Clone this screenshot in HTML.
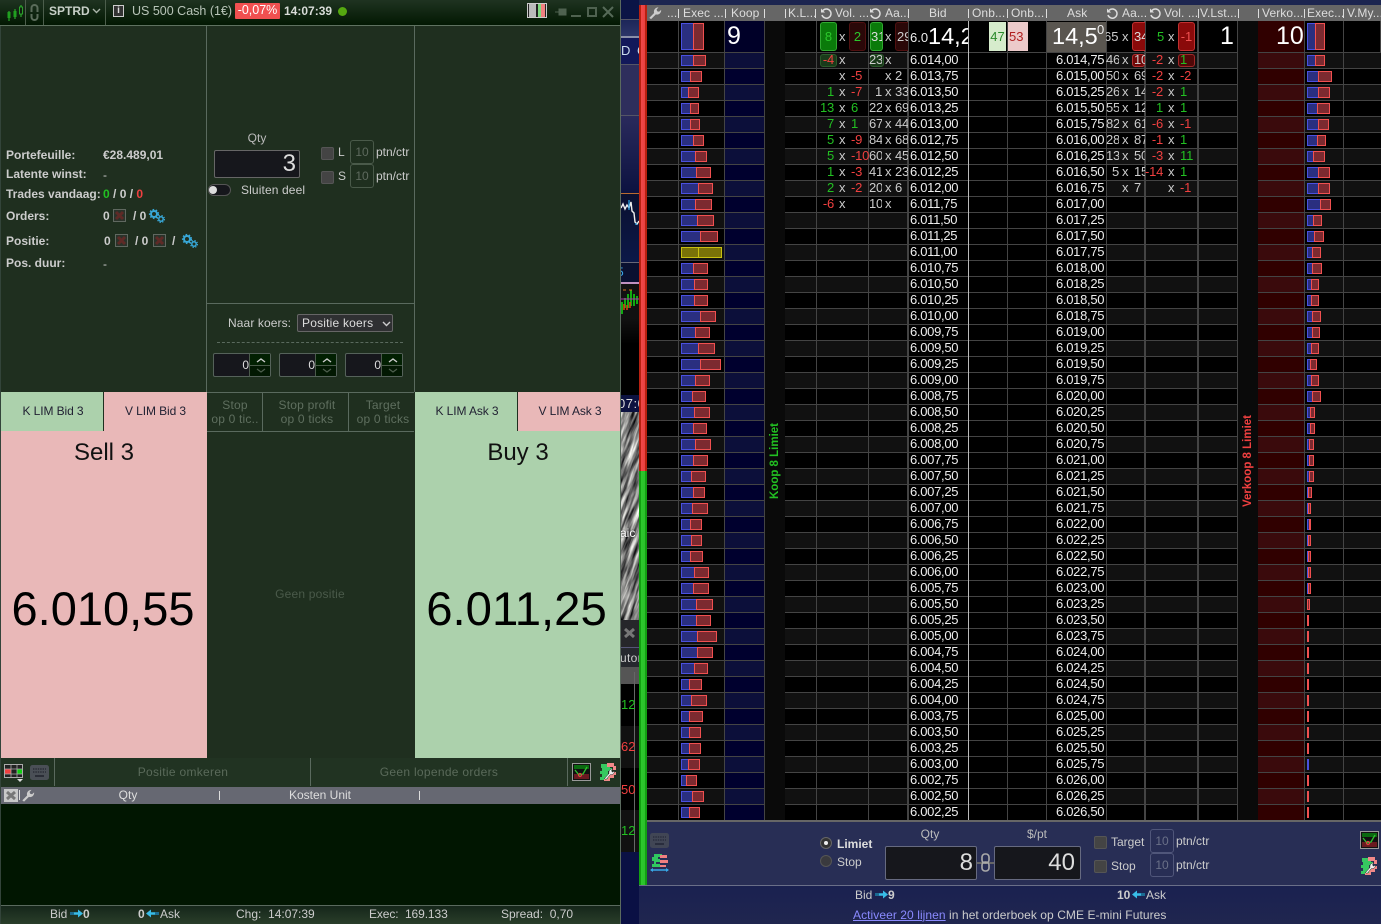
<!DOCTYPE html>
<html><head><meta charset="utf-8"><title>Trading</title>
<style>
html,body{margin:0;padding:0;background:#0c1240}
body{width:1381px;height:924px;position:relative;overflow:hidden;font:12px/14px "Liberation Sans",sans-serif;color:#ccc}
.a,.t,.st{position:absolute}
.t{white-space:nowrap}
.c{transform:translateX(-50%)}
.bd{font-weight:bold}
.g{color:#22c022}.r{color:#f04040}
.box{box-sizing:border-box;position:absolute}
svg{position:absolute;overflow:visible}
/* ladder */
.col{position:absolute;top:52px;height:769px;box-sizing:border-box;border-right:1px solid #444;background:linear-gradient(#444 1px,transparent 1px) 0 0/100% 16px,linear-gradient(#111 16px,#000 16px) 0 0/100% 32px}
.hc{position:absolute;top:21px;height:31px;box-sizing:border-box;border-right:1px solid #444;background:#000}
.st{top:52px;font-size:13px;line-height:16px;white-space:pre;overflow:hidden;letter-spacing:-.2px}
.p{color:#eee;letter-spacing:-.3px;font-size:13px}
.hd{position:absolute;top:6px;font-size:12px;line-height:14px;color:#ddd;white-space:nowrap;letter-spacing:.1px}
.tk{position:absolute;top:9px;width:1px;height:9px;background:#ddd}
.bars{position:absolute;top:52px}
.bars p{margin:0;height:16px;padding-top:3px;box-sizing:border-box;display:flex}
.bars i{display:block;height:11px;box-sizing:border-box;background:#2a2f80;border:1px solid #4a50e0}
.bars b{display:block;height:11px;box-sizing:border-box;background:#7c2a30;border:1px solid #f05050;margin-left:-1px}
.big{position:absolute;font-size:25px;line-height:28px;color:#fff;white-space:nowrap}
.inp{position:absolute;box-sizing:border-box;background:#16171c;border:1px solid #666;border-radius:2px;color:#ddd;text-align:right;font-size:24px}
.cb{position:absolute;box-sizing:border-box;width:13px;height:13px;background:#444;border:1px solid #555;border-radius:2px}
.n10{position:absolute;box-sizing:border-box;width:24px;height:24px;border:1px solid #4a5a4a;border-radius:3px;color:#5e6a5e;text-align:center;line-height:22px;font-size:12px}
.spin{position:absolute;box-sizing:border-box;width:58px;height:24px;top:353px;background:#16171c;border:1px solid #55625a;border-radius:2px;color:#ddd;text-align:right;padding-right:21px;font-size:12px;line-height:22px}
.spin u{position:absolute;right:0;top:0;width:20px;height:22px;background:linear-gradient(#022002 11px,#4a5a4a 11px,#4a5a4a 12px,#021802 12px);border-left:1px solid #4a5a4a}
.spin svg{left:0;top:0}
</style></head>
<body>
<svg width="0" height="0" style="position:absolute">
<defs>
<g id="gear"><circle cx="5" cy="5" r="3" fill="none" stroke="#38a8d8" stroke-width="2"/><circle cx="5" cy="5" r="4.4" fill="none" stroke="#38a8d8" stroke-width="1.4" stroke-dasharray="1.6 1.6"/><circle cx="12" cy="10" r="2.2" fill="none" stroke="#38a8d8" stroke-width="1.5"/><circle cx="12" cy="10" r="3.5" fill="none" stroke="#38a8d8" stroke-width="1.1" stroke-dasharray="1.4 1.4"/></g>
<g id="xb"><rect x=".5" y=".5" width="12" height="12" fill="#2a332a" stroke="#606860"/><path d="M3 3l7 7M10 3l-7 7" stroke="#5e2a26" stroke-width="3"/></g>
<path id="wr" d="M1.5 13.5 L7 8 C6 5 8 1.5 12 1.5 L9.8 4 L10.5 6 L12.6 6.6 L15 4.4 C15.4 8 12 10.6 9 9.6 L3.5 15 Z" fill="#ccc"/>
<g id="tick"><rect x=".5" y=".5" width="18" height="17" fill="#111" stroke="#999"/><rect x="2" y="2" width="15" height="4" fill="#0a6a10"/><rect x="2" y="11" width="15" height="5" fill="#6a1a20"/><path d="M3 7l4 5 4-1 4-7" fill="none" stroke="#30c030" stroke-width="1.3"/><circle cx="8" cy="12" r="1.6" fill="none" stroke="#e04040"/></g>
<g id="wtree"><path d="M2 1h9v4h2v3H9v3h2v3H9v3H1v-3h2v-3H1V8h2V5H2z" fill="#36c860"/><path d="M8 0h7v3h2v4h-3V4H8zM11 9h6v3h-2v3h-4v3H5v-2h4v-3h2z" fill="#f08888"/><path d="M5.5 15.5 L10 10.5 C9.4 8 11.2 5.6 14 6 L12.4 7.8 L13.6 9.2 L15.4 7.8 C15.6 10.4 13.6 12 11.4 11.6 L7 16.5 Z" fill="#eee" stroke="#222" stroke-width=".5"/></g>
<g id="kb"><rect x="0" y="0" width="19" height="15" rx="2.5" fill="#4a4f56"/><path d="M3 4h13M3 7h13" stroke="#2a2d36" stroke-width="1.6" stroke-dasharray="1.4 1"/><rect x="5" y="10" width="9" height="2" fill="#2a2d36"/></g>
<g id="arr"><path d="M0 3.2h8v-2.7l5 4-5 4v-2.7H0z" fill="#38bce8"/><path d="M0 3.2h4v2.6H0z" fill="#1a6a90"/></g>
<g id="arl"><path d="M13 3.2H5v-2.7l-5 4 5 4v-2.7h8z" fill="#38bce8"/><path d="M13 3.2H9v2.6h4z" fill="#1a6a90"/></g>
<filter id="rk" x="0" y="0" width="100%" height="100%" color-interpolation-filters="sRGB"><feTurbulence type="fractalNoise" baseFrequency=".28 .035" numOctaves="3" seed="4"/><feColorMatrix type="matrix" values="1.5 0 0 0 -.25 1.5 0 0 0 -.25 1.45 0 0 0 -.23 0 0 0 0 1"/></filter>
</defs>
</svg>

<!-- LEFT WINDOW -->
<div class="a" style="left:0;top:0;width:621px;height:924px;background:#1f2f1f;border-left:1px solid #33443a;border-right:1px solid #5a6a5e;box-sizing:border-box"></div>
<div class="a" style="left:0;top:0;width:620px;height:25px;background:linear-gradient(#1f3321,#021802);border-bottom:1px solid #5f7260"></div>
<div class="a" style="left:25px;top:0;width:1px;height:25px;background:#4c5e4c"></div>
<div class="a" style="left:43px;top:0;width:1px;height:25px;background:#4c5e4c"></div>
<div class="a" style="left:105px;top:0;width:1px;height:25px;background:#4c5e4c"></div>
<svg style="left:6px;top:3px" width="16" height="18"><path d="M3 8v10M9 6v10M15 2v12" stroke="#30c030"/><rect x="1.5" y="9" width="3" height="6" fill="#20a020"/><rect x="7.5" y="8" width="3" height="6" fill="#20a020"/><rect x="13.5" y="4" width="3" height="7" fill="#102010" stroke="#30c030" stroke-width=".8"/></svg>
<svg style="left:29px;top:3px" width="11" height="19"><path d="M1.5 9V5a4 4 0 0 1 8 0v4H7.5V5a2 2 0 0 0-4 0v4zM1.5 11v3a4 4 0 0 0 8 0v-3H7.5v3a2 2 0 0 1-4 0v-3z" fill="#5b6c5b"/></svg>
<div class="t bd" style="left:49px;top:4px;font-size:12px;color:#c8d0c8">SPTRD</div>
<svg style="left:92px;top:8px" width="9" height="6"><path d="M1 1l3.5 3.5L8 1" fill="none" stroke="#aab4aa" stroke-width="1.4"/></svg>
<div class="a" style="left:113px;top:5px;width:11px;height:12px;background:#ccc"></div>
<div class="a" style="left:114px;top:6px;width:9px;height:10px;background:#333;color:#ddd;font:bold 10px/10px 'Liberation Sans';text-align:center">i</div>
<div class="t" style="left:132px;top:4px;font-size:12.5px;color:#b8c4b8">US 500 Cash (1€)</div>
<div class="t" style="left:235px;top:3px;width:45px;height:16px;background:#f05050;color:#fff;text-align:center;line-height:15px;font-size:12.5px;border-radius:1px">-0,07%</div>
<div class="t bd" style="left:284px;top:4px;font-size:12px;color:#d8dcd8">14:07:39</div>
<div class="a" style="left:338px;top:7px;width:9px;height:9px;border-radius:50%;background:#55a810"></div>
<div class="a" style="left:527px;top:3px;width:20px;height:15px;box-sizing:border-box;border:1px solid #ccc;background:linear-gradient(90deg,#222 0,#222 1px,#bbb 1px,#bbb 8px,#222 8px,#222 10px,#80d880 10px,#80d880 13px,#f08080 13px,#f08080 17px,#222 17px)"></div>
<svg style="left:555px;top:7px" width="11" height="10"><path d="M0 5h4M4 2h7v6H4z" fill="#4f6250" stroke="#4f6250"/></svg>
<div class="a" style="left:571px;top:15px;width:10px;height:2px;background:#4f6250"></div>
<div class="a" style="left:587px;top:7px;width:10px;height:10px;box-sizing:border-box;border:2px solid #4f6250;border-top-width:2px"></div>
<svg style="left:603px;top:7px" width="10" height="10"><path d="M0 0l10 10M10 0L0 10" stroke="#566a58" stroke-width="2"/></svg>

<div class="a" style="left:206px;top:26px;width:1px;height:366px;background:#5a6a5e"></div>
<div class="a" style="left:414px;top:26px;width:1px;height:366px;background:#5a6a5e"></div>

<div class="t bd" style="left:6px;top:148px">Portefeuille:</div><div class="t bd" style="left:103px;top:148px">€28.489,01</div>
<div class="t bd" style="left:6px;top:167px">Latente winst:</div><div class="t" style="left:103px;top:168px">-</div>
<div class="t bd" style="left:6px;top:187px">Trades vandaag:</div><div class="t bd" style="left:103px;top:187px"><span class="g">0</span> / 0 / <span class="r">0</span></div>
<div class="t bd" style="left:6px;top:209px">Orders:</div><div class="t bd" style="left:103px;top:209px">0</div>
<svg style="left:113px;top:209px" width="13" height="13"><use href="#xb"/></svg><div class="t bd" style="left:133px;top:209px">/ 0</div>
<svg style="left:149px;top:209px" width="16" height="14"><use href="#gear"/></svg>
<div class="t bd" style="left:6px;top:234px">Positie:</div><div class="t bd" style="left:104px;top:234px">0</div>
<svg style="left:115px;top:234px" width="13" height="13"><use href="#xb"/></svg><div class="t bd" style="left:135px;top:234px">/ 0</div>
<svg style="left:153px;top:234px" width="13" height="13"><use href="#xb"/></svg><div class="t bd" style="left:172px;top:234px">/</div>
<svg style="left:182px;top:234px" width="16" height="14"><use href="#gear"/></svg>
<div class="t bd" style="left:6px;top:256px">Pos. duur:</div><div class="t" style="left:103px;top:257px">-</div>

<div class="t c" style="left:257px;top:131px;color:#bbb">Qty</div>
<div class="inp" style="left:214px;top:150px;width:86px;height:28px;line-height:26px;padding-right:3px">3</div>
<div class="a" style="left:208px;top:184px;width:23px;height:12px;box-sizing:border-box;background:#16171c;border:1px solid #555;border-radius:6px"></div>
<div class="a" style="left:209px;top:186px;width:8px;height:8px;border-radius:50%;background:#ddd"></div>
<div class="t" style="left:241px;top:183px;letter-spacing:.12px">Sluiten deel</div>
<div class="cb" style="left:321px;top:147px"></div><div class="t" style="left:338px;top:145px">L</div><div class="n10" style="left:350px;top:140px">10</div><div class="t" style="left:376px;top:145px">ptn/ctr</div>
<div class="cb" style="left:321px;top:171px"></div><div class="t" style="left:338px;top:169px">S</div><div class="n10" style="left:350px;top:164px">10</div><div class="t" style="left:376px;top:169px">ptn/ctr</div>

<div class="a" style="left:207px;top:303px;width:207px;height:1px;background:#5a6a5e"></div>
<div class="t" style="left:228px;top:316px;letter-spacing:.1px">Naar koers:</div>
<div class="a" style="left:297px;top:314px;width:96px;height:18px;box-sizing:border-box;background:#2f3032;border:1px solid #666;border-radius:2px;padding-left:4px;line-height:16px;color:#ddd;letter-spacing:.2px">Positie koers</div>
<svg style="left:382px;top:321px" width="9" height="6"><path d="M1 1l3.5 3.5L8 1" fill="none" stroke="#ccc" stroke-width="1.4"/></svg>
<div class="a" style="left:217px;top:342px;width:186px;border-top:1px dashed #5a6a5e"></div>
<div class="spin" style="left:213px">0<u></u><svg width="58" height="24"><path d="M43 12l4-3 4 3" transform="translate(0 -4)" fill="none" stroke="#ccc" stroke-width="1.4"/><path d="M43 15l4 3 4-3" fill="none" stroke="#4e5e4e" stroke-width="1.2"/></svg></div>
<div class="spin" style="left:279px">0<u></u><svg width="58" height="24"><path d="M43 12l4-3 4 3" transform="translate(0 -4)" fill="none" stroke="#ccc" stroke-width="1.4"/><path d="M43 15l4 3 4-3" fill="none" stroke="#4e5e4e" stroke-width="1.2"/></svg></div>
<div class="spin" style="left:345px">0<u></u><svg width="58" height="24"><path d="M43 12l4-3 4 3" transform="translate(0 -4)" fill="none" stroke="#ccc" stroke-width="1.4"/><path d="M43 15l4 3 4-3" fill="none" stroke="#4e5e4e" stroke-width="1.2"/></svg></div>

<!-- buttons -->
<div class="a" style="left:1px;top:392px;width:102px;height:39px;background:#acd1ac;color:#223;text-align:center;line-height:38px;padding-left:2px;box-sizing:border-box;letter-spacing:-.1px">K LIM Bid 3</div>
<div class="a" style="left:104px;top:392px;width:103px;height:39px;background:#e9b8b8;color:#223;text-align:center;line-height:38px;letter-spacing:-.1px">V LIM Bid 3</div>
<div class="a" style="left:207px;top:392px;width:207px;height:1px;background:#5a6a5e"></div>
<div class="a" style="left:207px;top:431px;width:207px;height:1px;background:#5a6a5e"></div>
<div class="a" style="left:262px;top:392px;width:1px;height:39px;background:#5a6a5e"></div>
<div class="a" style="left:348px;top:392px;width:1px;height:39px;background:#5a6a5e"></div>
<div class="t c" style="left:235px;top:398px;color:#5f6f5f;text-align:center;letter-spacing:.2px">Stop<br>op 0 tic..</div>
<div class="t c" style="left:307px;top:398px;color:#5f6f5f;text-align:center;letter-spacing:.2px">Stop profit<br>op 0 ticks</div>
<div class="t c" style="left:383px;top:398px;color:#5f6f5f;text-align:center;letter-spacing:.2px">Target<br>op 0 ticks</div>
<div class="a" style="left:415px;top:392px;width:102px;height:39px;background:#acd1ac;color:#223;text-align:center;line-height:38px;padding-left:2px;box-sizing:border-box;letter-spacing:-.1px">K LIM Ask 3</div>
<div class="a" style="left:518px;top:392px;width:102px;height:39px;background:#e9b8b8;color:#223;text-align:center;line-height:38px;padding-left:2px;box-sizing:border-box;letter-spacing:-.1px">V LIM Ask 3</div>
<div class="a" style="left:1px;top:431px;width:206px;height:327px;background:#e9b8b8"></div>
<div class="a" style="left:415px;top:431px;width:205px;height:327px;background:#acd1ac"></div>
<div class="t c" style="left:104px;top:439px;font-size:24px;line-height:28px;color:#111">Sell 3</div>
<div class="t c" style="left:518px;top:439px;font-size:24px;line-height:28px;color:#111">Buy 3</div>
<div class="t c" style="left:103px;top:580px;font-size:47px;line-height:58px;color:#000">6.010,55</div>
<div class="t c" style="left:516.5px;top:581px;font-size:47.3px;line-height:58px;color:#000">6.011,25</div>
<div class="t c" style="left:310px;top:587px;color:#4a5a4a;letter-spacing:.2px">Geen positie</div>

<!-- toolbar -->
<div class="a" style="left:1px;top:758px;width:619px;height:29px;background:#213322;border-bottom:1px solid #0a120a"></div>
<div class="a" style="left:54px;top:758px;width:1px;height:28px;background:#5a6a5e"></div>
<div class="a" style="left:310px;top:758px;width:1px;height:28px;background:#5a6a5e"></div>
<div class="a" style="left:567px;top:758px;width:1px;height:28px;background:#5a6a5e"></div>
<svg style="left:4px;top:764px" width="20" height="20"><rect x=".5" y=".5" width="18" height="13" fill="#222" stroke="#aaa"/><rect x="1" y="5" width="6" height="5" fill="#f04040"/><rect x="13" y="5" width="5" height="5" fill="#10d010"/><path d="M7 1v13M13 1v13M1 5h18M1 10h18" stroke="#aaa" stroke-width=".8"/><path d="M13 15h6l-3 3z" fill="#ddd"/></svg>
<svg style="left:30px;top:765px" width="19" height="15"><use href="#kb"/></svg>
<div class="t c" style="left:183px;top:765px;color:#5a6a5a;letter-spacing:.3px">Positie omkeren</div>
<div class="t c" style="left:439px;top:765px;color:#5a6a5a;letter-spacing:.3px">Geen lopende orders</div>
<svg style="left:572px;top:763px" width="19" height="18"><use href="#tick"/></svg>
<svg style="left:599px;top:763px" width="18" height="18"><use href="#wtree"/></svg>
<!-- table -->
<div class="a" style="left:1px;top:787px;width:619px;height:17px;background:#666872"></div>
<svg style="left:4px;top:789px" width="14" height="13"><rect width="14" height="13" fill="#c8c8c8"/><path d="M3 3l8 7M11 3l-8 7" stroke="#777" stroke-width="3"/></svg>
<div class="a" style="left:19px;top:790px;width:1px;height:10px;background:#ddd"></div>
<svg style="left:21px;top:788px" width="14" height="15" viewBox="0 0 16 16"><use href="#wr"/></svg>
<div class="t c" style="left:128px;top:788px;color:#ddd">Qty</div>
<div class="a" style="left:219px;top:791px;width:1px;height:9px;background:#ddd"></div>
<div class="t c" style="left:320px;top:788px;color:#ddd">Kosten Unit</div>
<div class="a" style="left:419px;top:791px;width:1px;height:9px;background:#ddd"></div>
<div class="a" style="left:1px;top:804px;width:619px;height:101px;background:#011601"></div>
<div class="a" style="left:1px;top:905px;width:619px;height:19px;background:linear-gradient(#15261a,#2a3e2a);border-top:1px solid #5a6a5e;box-sizing:border-box"></div>
<div class="t" style="left:50px;top:907px">Bid</div><svg style="left:70px;top:909px" width="13" height="9"><use href="#arr"/></svg><div class="t bd" style="left:83px;top:907px">0</div>
<div class="t bd" style="left:138px;top:907px">0</div><svg style="left:146px;top:909px" width="13" height="9"><use href="#arl"/></svg><div class="t" style="left:160px;top:907px">Ask</div>
<div class="t" style="left:236px;top:907px">Chg:&nbsp; 14:07:39</div>
<div class="t" style="left:369px;top:907px;letter-spacing:-.1px">Exec:&nbsp; 169.133</div>
<div class="t" style="left:501px;top:907px;letter-spacing:0">Spread:&nbsp; 0,70</div>

<!-- MIDDLE STRIP -->
<div class="a" style="left:621px;top:0;width:18px;height:924px;background:#0c1240;overflow:hidden" id="s">
  <div class="a" style="left:0;top:0;width:18px;height:19px;background:#0b1446;border-bottom:1px solid #556"></div>
  <div class="a" style="left:0;top:20px;width:18px;height:16px;background:linear-gradient(#1c2658,#2c3568);border-bottom:2px solid #8a8fa8"></div>
  <div class="a" style="left:0;top:38px;width:18px;height:26px;background:#12185a;border-bottom:1px solid #556"></div>
  <div class="t" style="left:0;top:44px;font-size:13px;color:#cde;letter-spacing:1.5px">D C</div>
  <div class="a" style="left:0;top:65px;width:18px;height:50px;background:#2e2e5c;border-bottom:1px solid #556"></div>
  <div class="a" style="left:0;top:116px;width:18px;height:77px;background:linear-gradient(#2a2a5c,#0c1240)"></div>
  <div class="a" style="left:0;top:193px;width:18px;height:1px;background:#b86a30"></div>
  <div class="a" style="left:0;top:194px;width:18px;height:68px;background:linear-gradient(#0a1030,#0c1848)"></div>
  <svg style="left:0;top:194px" width="18" height="40"><path d="M0 14l2-4 2 5 2-4 2 3 2-6 1 9 2 2 1 9 2 2 2-3" fill="none" stroke="#eee" stroke-width="1.4"/><path d="M8 6v10M15 29v2" stroke="#2aa0e0" stroke-width="1.3"/></svg>
  <div class="a" style="left:0;top:262px;width:18px;height:1px;background:#667"></div>
  <div class="a" style="left:0;top:263px;width:18px;height:19px;background:#0a1030"></div>
  <div class="t" style="left:-4px;top:265px;color:#38a8e8;font-size:12px">5</div>
  <div class="a" style="left:0;top:282px;width:18px;height:2px;background:#c090c0"></div>
  <div class="a" style="left:0;top:284px;width:18px;height:111px;background:linear-gradient(#111 0,#111 35px,#000 60px)"></div>
  <svg style="left:0;top:284px" width="18" height="36"><path d="M1 30V18M4 24V14M7 24V10M10 22V6M13 22V10M16 20V12" stroke="#10d010" stroke-width="1.6"/><path d="M3 26v-6M6 26v-5M9 24v-6" stroke="#d04010" stroke-width="1.6"/><path d="M0 15h18" stroke="#b030b0"/><path d="M2 6h3M8 6h3" stroke="#d87020"/></svg>
  <div class="t" style="left:-3px;top:397px;color:#ddd;font-size:13px;letter-spacing:.5px">07:0</div>
  <div class="a" style="left:0;top:412px;width:18px;height:208px;background:#808080;overflow:hidden"><svg style="left:0;top:0" width="18" height="208"><rect x="-60" y="-60" width="140" height="340" transform="rotate(20 9 104)" filter="url(#rk)"/></svg></div>
  <div class="t" style="left:-1px;top:526px;color:#fff;font-size:12px;text-shadow:0 0 2px #000">aic</div>
  <div class="a" style="left:0;top:620px;width:18px;height:27px;background:#26262a"></div>
  <svg style="left:3px;top:628px" width="11" height="10"><path d="M1 1l9 8M10 1L1 9" stroke="#777" stroke-width="3"/></svg>
  <div class="a" style="left:0;top:647px;width:18px;height:20px;background:#26282e;border-top:1px solid #557"></div>
  <div class="t" style="left:-1px;top:651px;color:#ccc;letter-spacing:.3px">utor</div>
  <div class="a" style="left:0;top:667px;width:18px;height:17px;background:#555"></div>
  <div class="a" style="left:0;top:684px;width:18px;height:42px;background:#000"></div>
  <div class="a" style="left:0;top:726px;width:18px;height:42px;background:#111"></div>
  <div class="a" style="left:0;top:768px;width:18px;height:42px;background:#000"></div>
  <div class="a" style="left:0;top:810px;width:18px;height:42px;background:#111"></div>
  <div class="a" style="left:13px;top:672px;width:1px;height:180px;background:#666"></div>
  <div class="t g" style="left:0;top:698px;font-size:13px">12</div>
  <div class="t r" style="left:0;top:740px;font-size:13px">62</div>
  <div class="t r" style="left:0;top:783px;font-size:13px">50</div>
  <div class="t g" style="left:0;top:824px;font-size:13px">12</div>
  <div class="a" style="left:0;top:852px;width:18px;height:72px;background:#0a1044"></div>
</div>

<!-- LADDER -->
<div class="a" style="left:639px;top:0;width:742px;height:5px;background:#1c2550"></div>
<div class="a" style="left:639px;top:5px;width:8px;height:466px;background:linear-gradient(90deg,#b82010 0,#b82010 2px,#f04848 2px,#e84040 6px,#b82010 6px)"></div>
<div class="a" style="left:639px;top:471px;width:8px;height:414px;background:linear-gradient(90deg,#12a012 0,#12a012 2px,#2cc82c 2px,#2cc02c 6px,#12a012 6px)"></div>

<div class="a" style="left:647px;top:21px;width:734px;height:31px;background:#000"></div>
<!-- header cells -->
<div class="hc" style="left:647px;width:32px"></div>
<div class="hc" style="left:679px;width:46px"></div>
<div class="hc" style="left:725px;width:40px;background:#000028"></div>
<div class="hc" style="left:785px;width:32px"></div>
<div class="hc" style="left:817px;width:52px"></div>
<div class="hc" style="left:869px;width:40px;border-right-width:2px"></div>
<div class="hc" style="left:909px;width:60px;border-right-color:#bbb"></div>
<div class="hc" style="left:969px;width:39px"></div>
<div class="hc" style="left:1008px;width:39px"></div>
<div class="hc" style="left:1047px;width:60px"></div>
<div class="hc" style="left:1107px;width:39px;border-right-width:2px"></div>
<div class="hc" style="left:1146px;width:53px;border-right-width:2px"></div>
<div class="hc" style="left:1199px;width:39px"></div>
<div class="hc" style="left:1258px;width:47px;background:#300000"></div>
<div class="hc" style="left:1305px;width:39px"></div>
<div class="hc" style="left:1344px;width:37px"></div>
<!-- dark cols -->
<div class="a" style="left:765px;top:21px;width:20px;height:800px;background:#0a0a0a"></div>
<div class="a" style="left:1238px;top:21px;width:20px;height:800px;background:#0a0a0a"></div>
<!-- body cols -->
<div class="col" style="left:647px;width:32px"></div>
<div class="col" style="left:679px;width:46px"></div>
<div class="col" style="left:725px;width:40px;background:linear-gradient(#444 1px,transparent 1px) 0 0/100% 16px,linear-gradient(#0c0f3a 16px,#00002e 16px) 0 0/100% 32px"></div>
<div class="col" style="left:785px;width:32px"></div>
<div class="col" style="left:817px;width:52px"></div>
<div class="col" style="left:869px;width:40px;border-right-width:2px"></div>
<div class="col" style="left:909px;width:60px;border-right-color:#bbb;background:linear-gradient(#444 1px,transparent 1px) 0 0/100% 16px,#000"></div>
<div class="col" style="left:969px;width:39px;background:linear-gradient(#444 1px,transparent 1px) 0 0/100% 16px,#000"></div>
<div class="col" style="left:1008px;width:39px;background:linear-gradient(#444 1px,transparent 1px) 0 0/100% 16px,#000"></div>
<div class="col" style="left:1047px;width:60px;background:linear-gradient(#444 1px,transparent 1px) 0 0/100% 16px,#000"></div>
<div class="col" style="left:1107px;width:39px;border-right-width:2px"></div>
<div class="col" style="left:1146px;width:53px;border-right-width:2px"></div>
<div class="col" style="left:1199px;width:39px"></div>
<div class="col" style="left:1258px;width:47px;background:linear-gradient(#444 1px,transparent 1px) 0 0/100% 16px,linear-gradient(#3a0a0c 16px,#300000 16px) 0 0/100% 32px"></div>
<div class="col" style="left:1305px;width:39px"></div>
<div class="col" style="left:1344px;width:37px;border-right:none"></div>

<!-- header bar -->
<div class="a" style="left:647px;top:5px;width:734px;height:16px;background:#666"></div>
<svg style="left:648px;top:6px" width="14" height="14" viewBox="0 0 16 16"><use href="#wr"/></svg>
<div class="hd" style="left:667px">...</div><div class="tk" style="left:678px"></div>
<div class="hd" style="left:683px">Exec ...</div><div class="tk" style="left:725px"></div>
<div class="hd" style="left:731px">Koop</div><div class="tk" style="left:764px"></div>
<div class="tk" style="left:785px"></div><div class="hd" style="left:788px">K.L...</div><div class="tk" style="left:815px"></div>
<svg style="left:820px;top:7px" width="12" height="12"><path d="M3 3.5A4.6 4.6 0 1 1 2 8" fill="none" stroke="#ddd" stroke-width="1.5"/><path d="M1 1.5v4h4z" fill="#ddd"/></svg>
<div class="hd" style="left:835px">Vol. ...</div>
<svg style="left:869px;top:7px" width="12" height="12"><path d="M3 3.5A4.6 4.6 0 1 1 2 8" fill="none" stroke="#ddd" stroke-width="1.5"/><path d="M1 1.5v4h4z" fill="#ddd"/></svg>
<div class="hd" style="left:885px">Aa...</div><div class="tk" style="left:908px"></div>
<div class="hd" style="left:929px">Bid</div><div class="tk" style="left:968px"></div>
<div class="hd" style="left:972px">Onb...</div><div class="tk" style="left:1007px"></div>
<div class="hd" style="left:1011px">Onb...</div><div class="tk" style="left:1046px"></div>
<div class="hd" style="left:1067px">Ask</div>
<svg style="left:1106px;top:7px" width="12" height="12"><path d="M3 3.5A4.6 4.6 0 1 1 2 8" fill="none" stroke="#ddd" stroke-width="1.5"/><path d="M1 1.5v4h4z" fill="#ddd"/></svg>
<div class="hd" style="left:1122px">Aa...</div>
<svg style="left:1149px;top:7px" width="12" height="12"><path d="M3 3.5A4.6 4.6 0 1 1 2 8" fill="none" stroke="#ddd" stroke-width="1.5"/><path d="M1 1.5v4h4z" fill="#ddd"/></svg>
<div class="hd" style="left:1164px">Vol. ...</div><div class="tk" style="left:1198px"></div>
<div class="hd" style="left:1200px">V.Lst...</div><div class="tk" style="left:1238px"></div>
<div class="tk" style="left:1258px"></div><div class="hd" style="left:1262px">Verko...</div><div class="tk" style="left:1304px"></div>
<div class="hd" style="left:1307px">Exec...</div><div class="tk" style="left:1343px"></div>
<div class="hd" style="left:1347px">V.My...</div>

<!-- header big cells -->
<div class="bars" style="left:681px;top:23px;display:flex"><i style="display:block;width:13px;height:27px;box-sizing:border-box;background:#2a2f80;border:1px solid #4a50e0"></i><b style="display:block;width:11px;height:27px;box-sizing:border-box;background:#7c2a30;border:1px solid #f05050;margin-left:-1px"></b></div>
<div class="bars" style="left:1307px;top:23px;display:flex"><i style="display:block;width:9px;height:27px;box-sizing:border-box;background:#2a2f80;border:1px solid #4a50e0"></i><b style="display:block;width:10px;height:27px;box-sizing:border-box;background:#7c2a30;border:1px solid #f05050;margin-left:-1px"></b></div>
<div class="big" style="left:727px;top:22px">9</div>
<div class="box" style="left:820px;top:22px;width:17px;height:29px;background:#0a7a0a;border:1px solid #30a830;border-radius:3px;color:#2cc82c;text-align:center;line-height:27px;font-size:13px">8</div>
<div class="t" style="left:839px;top:30px;font-size:13px;color:#ccc">x</div>
<div class="box" style="left:849px;top:22px;width:17px;height:29px;background:#2a0808;border:1px solid #501010;border-radius:3px;color:#2cc82c;text-align:center;line-height:27px;font-size:13px">2</div>
<div class="a" style="left:869px;top:22px;width:39px;height:30px;overflow:hidden;font-size:13px">
  <div class="box" style="left:1px;top:0;width:13px;height:29px;background:#0a7a0a;border:1px solid #30a830;border-radius:3px;color:#ddd;text-align:right;line-height:27px;overflow:hidden;white-space:nowrap">31</div>
  <div class="t" style="left:16px;top:8px;color:#ccc">x</div>
  <div class="box" style="left:26px;top:0;width:18px;height:29px;background:#2a0808;border:1px solid #501010;border-radius:3px;color:#ccc;line-height:27px;padding-left:1px">29</div>
</div>
<div class="t" style="left:910px;top:31px;font-size:13px;color:#eee">6.0</div>
<div class="a" style="left:928px;top:22px;width:40px;height:29px;overflow:hidden"><div class="big" style="left:0;top:0;font-size:23.5px">14,2</div></div>
<div class="box" style="left:989px;top:22px;width:17px;height:29px;background:#d6eccc;color:#2a8a2a;text-align:center;line-height:29px;font-size:13px">47</div>
<div class="box" style="left:1008px;top:22px;width:20px;height:29px;background:#eccaca;color:#b02020;text-align:left;padding-left:1px;line-height:29px;font-size:13px">53</div>
<div class="a" style="left:1047px;top:22px;width:59px;height:30px;background:#5a5650"></div>
<div class="big" style="left:1052px;top:22px;font-size:23.5px">14,5</div>
<div class="t" style="left:1097px;top:23px;font-size:13px;color:#eee">0</div>
<div class="a" style="left:1106px;top:22px;width:39px;height:30px;overflow:hidden;font-size:13px">
  <div class="t" style="left:-2px;top:8px;color:#ccc">65</div>
  <div class="t" style="left:16px;top:8px;color:#ccc">x</div>
  <div class="box" style="left:26px;top:0;width:18px;height:29px;background:#8a0a0a;border:1px solid #c03030;border-radius:3px;color:#ddd;line-height:27px;padding-left:1px">34</div>
</div>
<div class="t g" style="left:1157px;top:30px;font-size:13px">5</div>
<div class="t" style="left:1168px;top:30px;font-size:13px;color:#ccc">x</div>
<div class="box" style="left:1178px;top:22px;width:17px;height:29px;background:#8a0a0a;border:1px solid #c03030;border-radius:3px;color:#f05050;text-align:center;line-height:27px;font-size:13px">-1</div>
<div class="big" style="left:1220px;top:22px">1</div>
<div class="big" style="left:1276px;top:22px">10</div>

<!-- vertical labels -->
<div class="t bd g" style="left:775px;top:461px;transform:translate(-50%,-50%) rotate(-90deg);font-size:11.5px">Koop 8 Limiet</div>
<div class="t bd r" style="left:1248px;top:461px;transform:translate(-50%,-50%) rotate(-90deg);font-size:11.5px">Verkoop 8 Limiet</div>

<!-- row 0 boxes -->
<div class="box" style="left:820px;top:54px;width:17px;height:13px;background:#1a3a1a;border:1px solid #2a5a2a;border-radius:3px"></div>
<div class="box" style="left:870px;top:54px;width:14px;height:13px;background:#1a3a1a;border:1px solid #2a5a2a;border-radius:3px"></div>
<div class="box" style="left:1132px;top:54px;width:13px;height:13px;background:#700808;border:1px solid #b03030;border-radius:3px"></div>
<div class="box" style="left:1178px;top:54px;width:17px;height:13px;background:#500808;border:1px solid #a02828;border-radius:3px"></div>

<!-- Vol left -->
<div class="st" style="left:817px;width:17px;text-align:right"><span class="r">-4</span>

<span class="g">1</span>
<span class="g">13</span>
<span class="g">7</span>
<span class="g">5</span>
<span class="g">5</span>
<span class="g">1</span>
<span class="g">2</span>
<span class="r">-6</span></div>
<div class="st" style="left:839px;width:10px;color:#ccc">x
x
x
x
x
x
x
x
x
x</div>
<div class="st" style="left:851px;width:18px;"> 
<span class="r">-5</span>
<span class="r">-7</span>
<span class="g">6</span>
<span class="g">1</span>
<span class="r">-9</span>
<span class="r">-10</span>
<span class="r">-3</span>
<span class="r">-2</span></div>
<!-- Aa left -->
<div class="st" style="left:869px;width:13px;text-align:right;color:#ccc">23

1
22
67
84
60
41
20
10</div>
<div class="st" style="left:885px;width:10px;color:#ccc">x
x
x
x
x
x
x
x
x
x</div>
<div class="st" style="left:895px;width:13px;color:#ccc"> 
2
33
69
44
68
45
23
6</div>
<!-- Bid -->
<div class="st p" style="left:910px;width:57px">6.014,00
6.013,75
6.013,50
6.013,25
6.013,00
6.012,75
6.012,50
6.012,25
6.012,00
6.011,75
6.011,50
6.011,25
6.011,00
6.010,75
6.010,50
6.010,25
6.010,00
6.009,75
6.009,50
6.009,25
6.009,00
6.008,75
6.008,50
6.008,25
6.008,00
6.007,75
6.007,50
6.007,25
6.007,00
6.006,75
6.006,50
6.006,25
6.006,00
6.005,75
6.005,50
6.005,25
6.005,00
6.004,75
6.004,50
6.004,25
6.004,00
6.003,75
6.003,50
6.003,25
6.003,00
6.002,75
6.002,50
6.002,25</div>
<!-- Ask -->
<div class="st p" style="left:1056px;width:50px">6.014,75
6.015,00
6.015,25
6.015,50
6.015,75
6.016,00
6.016,25
6.016,50
6.016,75
6.017,00
6.017,25
6.017,50
6.017,75
6.018,00
6.018,25
6.018,50
6.018,75
6.019,00
6.019,25
6.019,50
6.019,75
6.020,00
6.020,25
6.020,50
6.020,75
6.021,00
6.021,25
6.021,50
6.021,75
6.022,00
6.022,25
6.022,50
6.022,75
6.023,00
6.023,25
6.023,50
6.023,75
6.024,00
6.024,25
6.024,50
6.024,75
6.025,00
6.025,25
6.025,50
6.025,75
6.026,00
6.026,25
6.026,50</div>
<!-- Aa right -->
<div class="st" style="left:1106px;width:13px;text-align:right;color:#ccc">46
50
26
55
82
28
13
5</div>
<div class="st" style="left:1122px;width:10px;color:#ccc">x
x
x
x
x
x
x
x
x</div>
<div class="st" style="left:1134px;width:11px;color:#ccc">10
69
14
12
61
87
50
15
7</div>
<!-- Vol right -->
<div class="st" style="left:1145px;width:18px;text-align:right"><span class="r">-2</span>
<span class="r">-2</span>
<span class="r">-2</span>
<span class="g">1</span>
<span class="r">-6</span>
<span class="r">-1</span>
<span class="r">-3</span>
<span class="r">-14</span></div>
<div class="st" style="left:1168px;width:10px;color:#ccc">x
x
x
x
x
x
x
x
x</div>
<div class="st" style="left:1180px;width:18px"><span class="g">1</span>
<span class="r">-2</span>
<span class="g">1</span>
<span class="g">1</span>
<span class="r">-1</span>
<span class="g">1</span>
<span class="g">11</span>
<span class="g">1</span>
<span class="r">-1</span></div>

<!-- exec bars left -->
<div class="bars" style="left:681px">
<p><i style="width:13px"></i><b style="width:13px"></b></p>
<p><i style="width:10px"></i><b style="width:12px"></b></p>
<p><i style="width:8px"></i><b style="width:11px"></b></p>
<p><i style="width:10px"></i><b style="width:9px"></b></p>
<p><i style="width:10px"></i><b style="width:10px"></b></p>
<p><i style="width:13px"></i><b style="width:11px"></b></p>
<p><i style="width:15px"></i><b style="width:12px"></b></p>
<p><i style="width:16px"></i><b style="width:15px"></b></p>
<p><i style="width:18px"></i><b style="width:15px"></b></p>
<p><i style="width:15px"></i><b style="width:17px"></b></p>
<p><i style="width:17px"></i><b style="width:17px"></b></p>
<p><i style="width:20px"></i><b style="width:18px"></b></p>
<p><i style="width:18px;background:#7a7208;border-color:#c8c010"></i><b style="width:24px;background:#7a7208;border-color:#c8c010"></b></p>
<p><i style="width:13px"></i><b style="width:15px"></b></p>
<p><i style="width:14px"></i><b style="width:14px"></b></p>
<p><i style="width:14px"></i><b style="width:14px"></b></p>
<p><i style="width:20px"></i><b style="width:16px"></b></p>
<p><i style="width:15px"></i><b style="width:15px"></b></p>
<p><i style="width:18px"></i><b style="width:17px"></b></p>
<p><i style="width:20px"></i><b style="width:21px"></b></p>
<p><i style="width:15px"></i><b style="width:15px"></b></p>
<p><i style="width:12px"></i><b style="width:14px"></b></p>
<p><i style="width:14px"></i><b style="width:16px"></b></p>
<p><i style="width:13px"></i><b style="width:14px"></b></p>
<p><i style="width:15px"></i><b style="width:16px"></b></p>
<p><i style="width:13px"></i><b style="width:15px"></b></p>
<p><i style="width:11px"></i><b style="width:15px"></b></p>
<p><i style="width:13px"></i><b style="width:12px"></b></p>
<p><i style="width:12px"></i><b style="width:16px"></b></p>
<p><i style="width:10px"></i><b style="width:12px"></b></p>
<p><i style="width:11px"></i><b style="width:11px"></b></p>
<p><i style="width:10px"></i><b style="width:13px"></b></p>
<p><i style="width:14px"></i><b style="width:15px"></b></p>
<p><i style="width:13px"></i><b style="width:16px"></b></p>
<p><i style="width:16px"></i><b style="width:17px"></b></p>
<p><i style="width:16px"></i><b style="width:15px"></b></p>
<p><i style="width:17px"></i><b style="width:20px"></b></p>
<p><i style="width:17px"></i><b style="width:16px"></b></p>
<p><i style="width:14px"></i><b style="width:14px"></b></p>
<p><i style="width:9px"></i><b style="width:13px"></b></p>
<p><i style="width:11px"></i><b style="width:16px"></b></p>
<p><i style="width:9px"></i><b style="width:14px"></b></p>
<p><i style="width:9px"></i><b style="width:12px"></b></p>
<p><i style="width:9px"></i><b style="width:12px"></b></p>
<p><i style="width:8px"></i><b style="width:12px"></b></p>
<p><i style="width:6px"></i><b style="width:11px"></b></p>
<p><i style="width:12px"></i><b style="width:12px"></b></p>
<p><i style="width:9px"></i><b style="width:11px"></b></p>
</div>
<!-- exec bars right -->
<div class="bars" style="left:1307px">
<p><i style="width:9px"></i><b style="width:10px"></b></p>
<p><i style="width:12px"></i><b style="width:14px"></b></p>
<p><i style="width:12px"></i><b style="width:12px"></b></p>
<p><i style="width:11px"></i><b style="width:13px"></b></p>
<p><i style="width:12px"></i><b style="width:11px"></b></p>
<p><i style="width:11px"></i><b style="width:9px"></b></p>
<p><i style="width:7px"></i><b style="width:12px"></b></p>
<p><i style="width:12px"></i><b style="width:12px"></b></p>
<p><i style="width:12px"></i><b style="width:12px"></b></p>
<p><i style="width:14px"></i><b style="width:11px"></b></p>
<p><i style="width:7px"></i><b style="width:9px"></b></p>
<p><i style="width:8px"></i><b style="width:10px"></b></p>
<p><i style="width:6px"></i><b style="width:9px"></b></p>
<p><i style="width:6px"></i><b style="width:10px"></b></p>
<p><i style="width:5px"></i><b style="width:8px"></b></p>
<p><i style="width:5px"></i><b style="width:8px"></b></p>
<p><i style="width:6px"></i><b style="width:9px"></b></p>
<p><i style="width:6px"></i><b style="width:8px"></b></p>
<p><i style="width:5px"></i><b style="width:8px"></b></p>
<p><i style="width:4px"></i><b style="width:7px"></b></p>
<p><i style="width:5px"></i><b style="width:8px"></b></p>
<p><i style="width:6px"></i><b style="width:9px"></b></p>
<p><i style="width:4px"></i><b style="width:5px"></b></p>
<p><i style="width:4px"></i><b style="width:5px"></b></p>
<p><i style="width:3px"></i><b style="width:5px"></b></p>
<p><i style="width:3px"></i><b style="width:5px"></b></p>
<p><i style="width:3px"></i><b style="width:5px"></b></p>
<p><i style="width:2px"></i><b style="width:4px"></b></p>
<p><i style="width:2px"></i><b style="width:3px"></b></p>
<p><i style="width:3px"></i><b style="width:2px"></b></p>
<p><i style="width:2px"></i><b style="width:3px"></b></p>
<p><i style="width:1px"></i><b style="width:3px"></b></p>
<p><i style="width:1px"></i><b style="width:3px"></b></p>
<p><i style="width:2px"></i><b style="width:3px"></b></p>
<p><b style="width:3px;margin:0"></b></p>
<p><b style="width:2px;margin:0"></b></p>
<p><b style="width:2px;margin:0"></b></p>
<p><b style="width:2px;margin:0"></b></p>
<p><b style="width:2px;margin:0"></b></p>
<p><b style="width:2px;margin:0"></b></p>
<p><b style="width:2px;margin:0"></b></p>
<p><b style="width:2px;margin:0"></b></p>
<p><b style="width:2px;margin:0"></b></p>
<p><b style="width:2px;margin:0"></b></p>
<p><i style="width:2px"></i></p>
<p><b style="width:2px;margin:0"></b></p>
<p><b style="width:2px;margin:0"></b></p>
<p><b style="width:2px;margin:0"></b></p>
</div>

<!-- ORDER PANEL -->
<div class="a" style="left:647px;top:820px;width:734px;height:65px;background:#282e55;border-top:2px solid #666;box-sizing:border-box"></div>
<div class="a" style="left:639px;top:885px;width:742px;height:39px;background:linear-gradient(#1a2150,#20264f);border-top:1px solid #6a6f88;box-sizing:border-box"></div>
<svg style="left:650px;top:833px;opacity:.75" width="19" height="15"><use href="#kb"/></svg>
<svg style="left:650px;top:853px" width="20" height="20"><path d="M4 1h8v3H8v2h2v3H6v2h4v3H2v-3h2V8H2V4h2z" fill="#30c860"/><path d="M10 2h7v3h-5v2h6v3h-6v2h4v2h-6v-2h2v-2h-2V7h2V5h-2z" fill="#f08080"/><path d="M1 17h17" stroke="#38a8e8" stroke-width="1.4"/><path d="M0 17l3-2v4zM19 17l-3-2v4z" fill="#38a8e8"/></svg>
<div class="a" style="left:820px;top:837px;width:12px;height:12px;box-sizing:border-box;border-radius:50%;background:#333;border:1px solid #666"></div>
<div class="a" style="left:824px;top:841px;width:4px;height:4px;border-radius:50%;background:#eee"></div>
<div class="t bd" style="left:837px;top:837px;color:#ddd">Limiet</div>
<div class="a" style="left:820px;top:855px;width:12px;height:12px;box-sizing:border-box;border-radius:50%;background:#3a3a3e;border:1px solid #555"></div>
<div class="t" style="left:837px;top:855px">Stop</div>
<div class="t c" style="left:930px;top:827px;color:#bbb">Qty</div>
<div class="t c" style="left:1037px;top:827px;color:#bbb">$/pt</div>
<div class="a" style="left:976px;top:862px;width:20px;height:2px;background:#666"></div>
<div class="inp" style="left:885px;top:846px;width:92px;height:34px;line-height:32px;padding-right:3px;border-color:#666a80">8</div>
<div class="inp" style="left:994px;top:846px;width:87px;height:34px;line-height:32px;padding-right:5px;border-color:#666a80">40</div>
<svg style="left:981px;top:853px" width="9" height="20"><rect x="1" y="1" width="7" height="9" rx="3" fill="none" stroke="#aaa" stroke-width="1.6"/><rect x="1" y="9" width="7" height="9" rx="3" fill="none" stroke="#aaa" stroke-width="1.6"/></svg>
<div class="cb" style="left:1094px;top:836px"></div><div class="t" style="left:1111px;top:835px">Target</div>
<div class="n10" style="left:1150px;top:829px;border-color:#50567a;color:#6a7088">10</div><div class="t" style="left:1176px;top:834px">ptn/ctr</div>
<div class="cb" style="left:1094px;top:860px"></div><div class="t" style="left:1111px;top:859px">Stop</div>
<div class="n10" style="left:1150px;top:853px;border-color:#50567a;color:#6a7088">10</div><div class="t" style="left:1176px;top:858px">ptn/ctr</div>
<svg style="left:1360px;top:831px" width="19" height="18"><use href="#tick"/></svg>
<svg style="left:1360px;top:857px" width="18" height="18"><use href="#wtree"/></svg>
<div class="t" style="left:855px;top:888px">Bid</div><svg style="left:875px;top:890px" width="13" height="9"><use href="#arr"/></svg><div class="t bd" style="left:888px;top:888px">9</div>
<div class="t bd" style="left:1117px;top:888px">10</div><svg style="left:1132px;top:890px" width="13" height="9"><use href="#arl"/></svg><div class="t" style="left:1146px;top:888px">Ask</div>
<div class="t" style="left:853px;top:907.5px;letter-spacing:.07px"><span style="color:#8a8aff;text-decoration:underline">Activeer 20 lijnen</span> in het orderboek op CME E-mini Futures</div>
</body></html>
